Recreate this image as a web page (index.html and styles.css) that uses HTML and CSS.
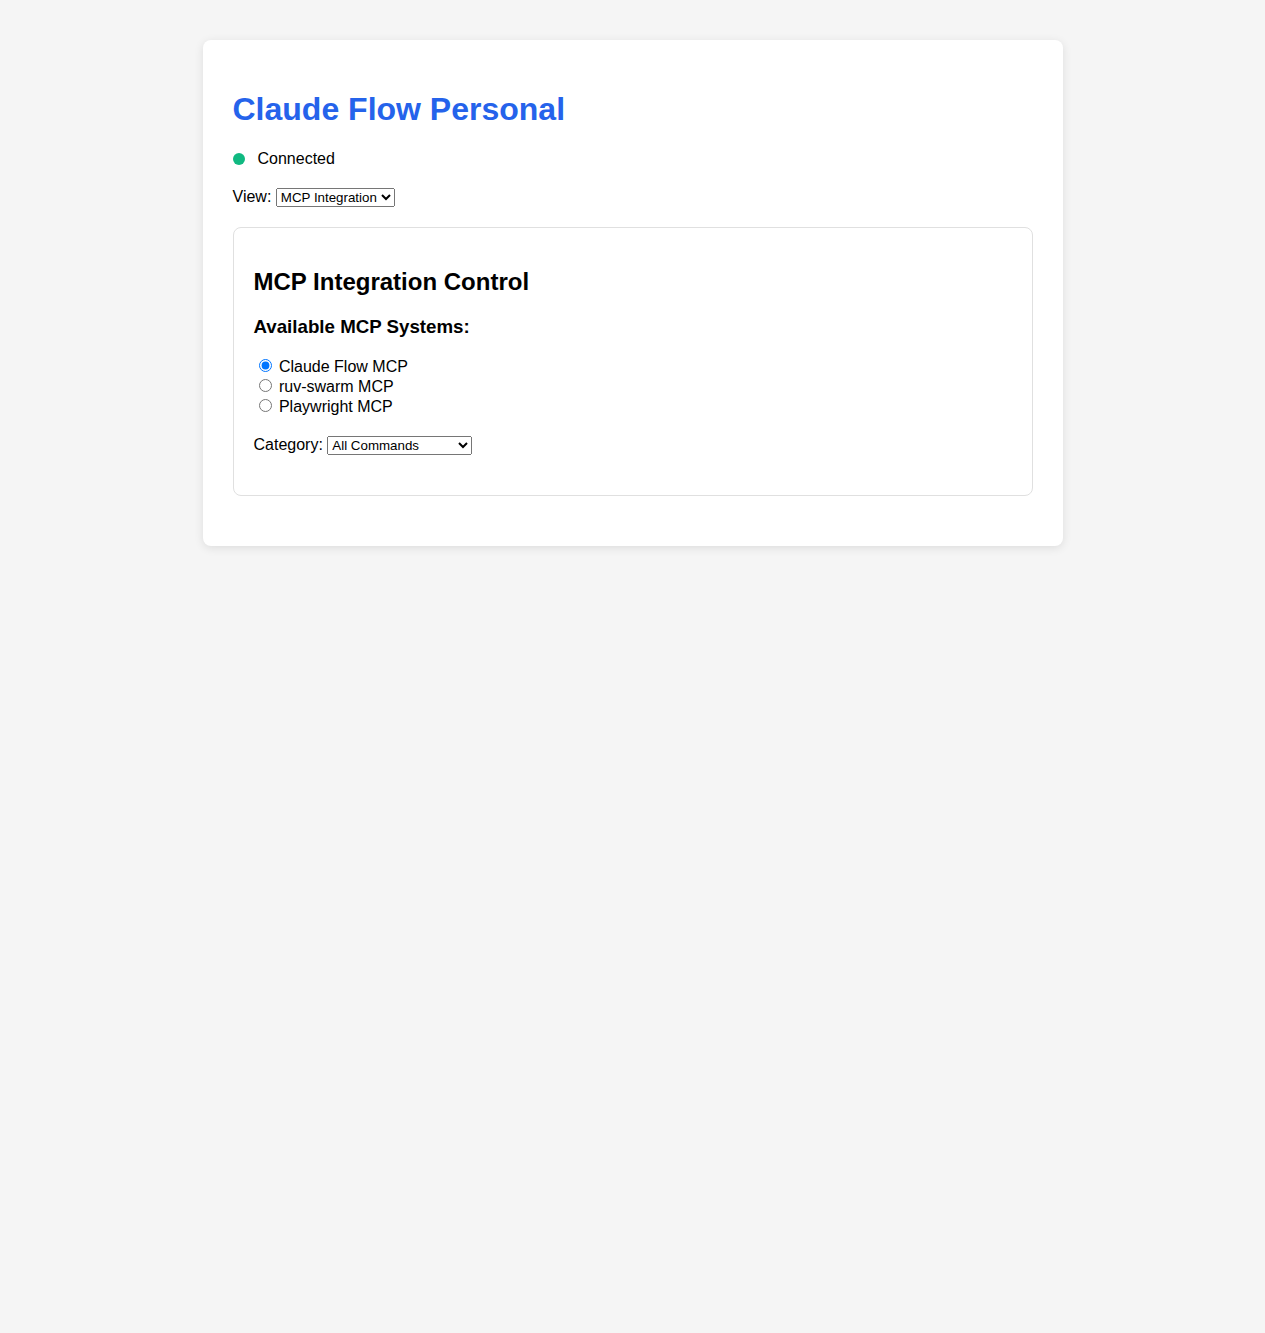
FILE: index.html
```html
<!DOCTYPE html>
<html lang="en">
<head>
<meta charset="utf-8">
<title>Claude Flow Personal</title>
<link rel="stylesheet" href="styles.css">
</head>
<body>
<div class="container">
  <h1 class="title">Claude Flow Personal</h1>
  <div class="status">
    <span class="dot"></span>
    <span class="status-text">Connected</span>
  </div>
  <div class="view-row">
    <label for="view">View:</label>
    <select id="view" class="view-select">
      <option>MCP Integration</option>
    </select>
  </div>
  <div class="panel">
    <h2 class="panel-title">MCP Integration Control</h2>
    <h3 class="panel-sub">Available MCP Systems:</h3>
    <div class="systems">
      <label class="system"><input type="radio" name="mcp" checked> Claude Flow MCP</label>
      <label class="system"><input type="radio" name="mcp"> ruv-swarm MCP</label>
      <label class="system"><input type="radio" name="mcp"> Playwright MCP</label>
    </div>
    <div class="category-row">
      <label for="cat">Category:</label>
      <select id="cat" class="cat-select">
        <option>All Commands</option>
      </select>
    </div>
  </div>
</div>
</body>
</html>
```
FILE: styles.css
```css
body {
  margin: 0;
  padding: 20px;
  background: #f5f5f5;
  font-family: "Liberation Sans", Arial, sans-serif;
  font-size: 16px;
  color: #000;
}
.container {
  max-width: 800px;
  margin: 20px auto;
  background: #fff;
  padding: 30px;
  border-radius: 8px;
  box-shadow: 0 2px 10px rgba(0, 0, 0, 0.1);
}
.title {
  color: #2563eb;
  font-size: 32px;
  margin: 21px 0 22px;
}
.status {
  display: flex;
  align-items: center;
  gap: 12px;
  margin-bottom: 20px;
  height: 18px;
}
.status-text {
  padding-left: 1px;
}
.dot {
  width: 12px;
  height: 12px;
  border-radius: 50%;
  background: #10b981;
}
.view-row {
  margin-bottom: 20px;
}
.view-select, .cat-select {
  font-family: "Liberation Sans", Arial, sans-serif;
  font-size: 13.333px;
}
.view-select {
  width: 119px;
}
.cat-select {
  width: 145px;
}
.panel {
  border: 1px solid #e0e0e0;
  border-radius: 8px;
  padding: 20px;
  margin: 20px 0;
}
.panel-title {
  font-size: 24px;
  margin: 20px 0;
}
.panel-sub {
  font-size: 18.72px;
  margin: 19px 0 18px;
}
.systems {
  margin-bottom: 20px;
}
.system {
  display: block;
  height: 20px;
}
.category-row {
  margin-bottom: 20px;
}
```
